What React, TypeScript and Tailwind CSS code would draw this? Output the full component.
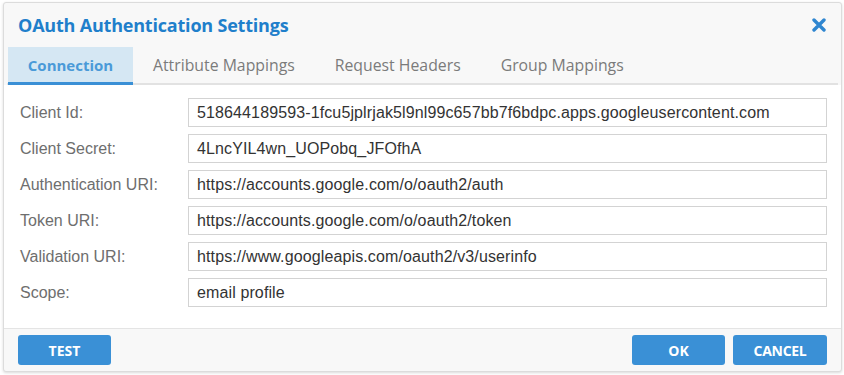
import { useState } from 'react';

const tabs = ['Connection', 'Attribute Mappings', 'Request Headers', 'Group Mappings'];

const fields = [
    { label: 'Client Id:', value: '518644189593-1fcu5jplrjak5l9nl99c657bb7f6bdpc.apps.googleusercontent.com' },
    { label: 'Client Secret:', value: '4LncYIL4wn_UOPobq_JFOfhA' },
    { label: 'Authentication URI:', value: 'https://accounts.google.com/o/oauth2/auth' },
    { label: 'Token URI:', value: 'https://accounts.google.com/o/oauth2/token' },
    { label: 'Validation URI:', value: 'https://www.googleapis.com/oauth2/v3/userinfo' },
    { label: 'Scope:', value: 'email profile' },
];

const uiFont = { fontFamily: '"Open Sans", "Noto Sans", sans-serif' };
const formFont = { fontFamily: '"Liberation Sans", Arial, sans-serif' };

export default function App() {
    const [active, setActive] = useState(0);

    return (
        <div className="h-[375px] w-[844px] bg-white pl-[3px] pt-[2px]">
            <div
                className="flex h-[370px] w-[839px] flex-col rounded-[3px] border border-[#dcdcdc] bg-[#f8f8f8] shadow-[0_1px_3px_rgba(0,0,0,0.15)]"
                style={uiFont}
            >
                <div className="flex h-[44px] shrink-0 items-center justify-between pl-[14px] pr-[15px]">
                    <h1 className="text-[18px] font-bold tracking-[-0.2px] text-[#1f7fcb]">OAuth Authentication Settings</h1>
                    <button type="button" className="text-[#2f86d0]">
                        <svg width="14" height="14" viewBox="0 0 14 14">
                            <path d="M2 2 L12 12 M12 2 L2 12" stroke="currentColor" strokeWidth="3.4" strokeLinecap="round" />
                        </svg>
                    </button>
                </div>

                <div className="mx-[3px] flex h-[38px] shrink-0 border-b-2 border-[#e2e2e2] pl-[1px]">
                    {tabs.map((t, i) => (
                        <button
                            key={t}
                            type="button"
                            onClick={() => setActive(i)}
                            className={
                                i === active
                                    ? '-mb-[2px] w-[125px] border-b-[3px] border-[#3a90d6] bg-[#d5e7f3] pt-[1px] text-[15px] font-bold text-[#4a9ad8]'
                                    : 'px-[20px] pt-[1px] text-[15.8px] text-[#7b7b7b]'
                            }
                        >
                            {t}
                        </button>
                    ))}
                </div>

                <div className="flex flex-1 flex-col gap-[7px] bg-white pl-[16px] pr-[14px] pt-[13px]" style={formFont}>
                    {fields.map((f) => (
                        <div key={f.label} className="flex items-center">
                            <label className="w-[168px] text-[16px] text-[#6e6e6e]">{f.label}</label>
                            <div className="flex h-[29px] flex-1 items-center border border-[#d3d3d3] bg-white px-[8px] text-[16px] tracking-[0.12px] text-[#333]">
                                {f.value}
                            </div>
                        </div>
                    ))}
                </div>

                <div className="flex h-[43px] shrink-0 items-center justify-between border-t border-[#e4e4e4] pl-[14px] pr-[14px]">
                    <button type="button" className="h-[30px] w-[93px] rounded-[3px] bg-[#3a90d6] text-[14px] font-bold text-white">
                        TEST
                    </button>
                    <div className="flex gap-[8px]">
                        <button type="button" className="h-[30px] w-[93px] rounded-[3px] bg-[#3a90d6] text-[14px] font-bold text-white">
                            OK
                        </button>
                        <button type="button" className="h-[30px] w-[94px] rounded-[3px] bg-[#3a90d6] text-[14px] font-bold tracking-[-0.3px] text-white">
                            CANCEL
                        </button>
                    </div>
                </div>
            </div>
        </div>
    );
}
